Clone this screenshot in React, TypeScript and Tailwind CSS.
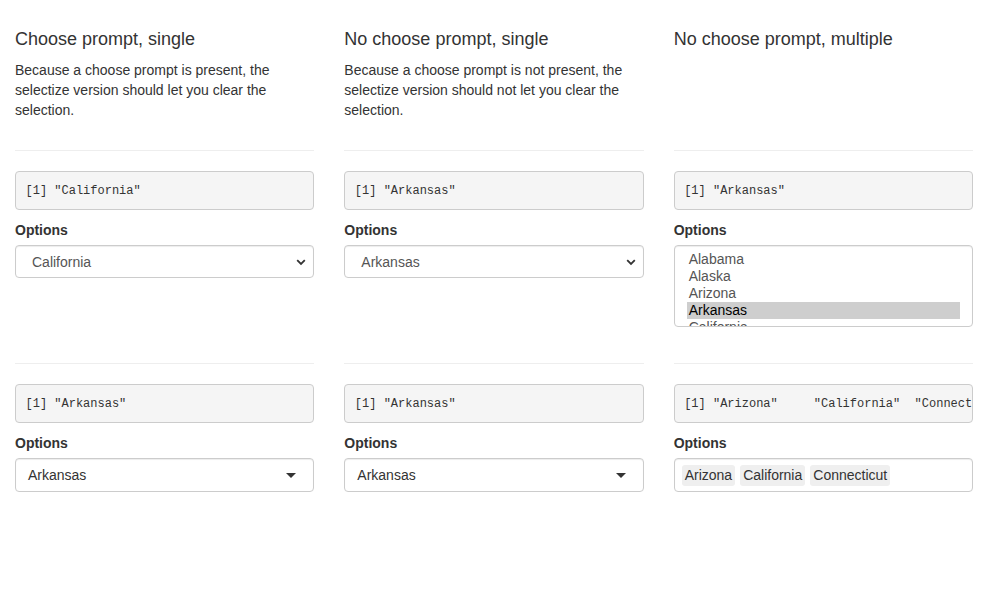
const mono = { fontFamily: '"Liberation Mono", "DejaVu Sans Mono", monospace' }

const states = ['Alabama', 'Alaska', 'Arizona', 'Arkansas', 'California']

function Output({ text }: { text: string }) {
  return (
    <pre
      style={mono}
      className="mb-[10px] overflow-hidden whitespace-pre rounded border border-[#ccc] bg-[#f5f5f5] p-[9.5px] text-[12px] leading-[18px] text-[#333]"
    >
      {text}
    </pre>
  )
}

function Label() {
  return <label className="mb-[5px] block font-bold leading-5">Options</label>
}

// native select (chrome look)
function NativeSelect({ value }: { value: string }) {
  return (
    <div className="relative flex h-[33px] items-center rounded border border-[#ccc] pl-[16px] text-[#555] shadow-[inset_0_1px_1px_rgba(0,0,0,0.075)]">
      {value}
      <svg className="absolute right-[7px] top-[13px]" width="10" height="7" viewBox="0 0 10 7">
        <path d="M1.2 1.2 L5 5 L8.8 1.2" fill="none" stroke="#333" strokeWidth="1.8" />
      </svg>
    </div>
  )
}

function MultiSelect() {
  return (
    <div className="h-[82px] overflow-hidden rounded border border-[#ccc] px-[12px] pt-[5px] text-[#555] shadow-[inset_0_1px_1px_rgba(0,0,0,0.075)]">
      {states.map((s) => (
        <div
          key={s}
          className={`pl-[2px] leading-[17px] ${s === 'Arkansas' ? 'bg-[#cecece] text-black' : ''}`}
        >
          {s}
        </div>
      ))}
    </div>
  )
}

function SelectizeSingle({ value }: { value: string }) {
  return (
    <div className="relative flex h-[34px] items-center rounded border border-[#ccc] pl-[12px] text-[#333] shadow-[inset_0_1px_1px_rgba(0,0,0,0.075)]">
      {value}
      <span className="absolute right-[17px] top-[14px] h-0 w-0 border-x-[5px] border-t-[5px] border-x-transparent border-t-[#333]" />
    </div>
  )
}

function SelectizeMulti({ items }: { items: string[] }) {
  return (
    <div className="flex h-[34px] gap-[5px] rounded border border-[#ccc] pl-[7px] pt-[6px] text-[#333] shadow-[inset_0_1px_1px_rgba(0,0,0,0.075)]">
      {items.map((s) => (
        <span key={s} className="h-[21px] rounded-[3px] bg-[#efefef] px-[3px] leading-[21px]">
          {s}
        </span>
      ))}
    </div>
  )
}

function Cell({ children }: { children: React.ReactNode }) {
  return (
    <div className="px-[15px]">
      <hr className="mb-[20px] mt-[20px] border-0 border-t border-[#eee]" />
      {children}
      <div className="h-[16px]" />
    </div>
  )
}

export default function App() {
  return (
    <div
      className="h-[613px] w-[988px] bg-white text-[14px] leading-5 text-[#333]"
      style={{ fontFamily: '"Liberation Sans", Arial, sans-serif' }}
    >
      <div className="grid grid-cols-3">
        <div className="px-[15px]">
          <h4 className="mb-[11px] mt-[29px] text-[18px] leading-[20px]">Choose prompt, single</h4>
          <p className="mb-[10px]">
            Because a choose prompt is present, the selectize version should let you clear the selection.
          </p>
        </div>
        <div className="px-[15px]">
          <h4 className="mb-[11px] mt-[29px] text-[18px] leading-[20px]">No choose prompt, single</h4>
          <p className="mb-[10px]">
            Because a choose prompt is not present, the selectize version should not let you clear the selection.
          </p>
        </div>
        <div className="px-[15px]">
          <h4 className="mb-[11px] mt-[29px] text-[18px] leading-[20px]">No choose prompt, multiple</h4>
        </div>

        <Cell>
          <Output text={'[1] "California"'} />
          <Label />
          <NativeSelect value="California" />
        </Cell>
        <Cell>
          <Output text={'[1] "Arkansas"'} />
          <Label />
          <NativeSelect value="Arkansas" />
        </Cell>
        <Cell>
          <Output text={'[1] "Arkansas"'} />
          <Label />
          <MultiSelect />
        </Cell>

        <Cell>
          <Output text={'[1] "Arkansas"'} />
          <Label />
          <SelectizeSingle value="Arkansas" />
        </Cell>
        <Cell>
          <Output text={'[1] "Arkansas"'} />
          <Label />
          <SelectizeSingle value="Arkansas" />
        </Cell>
        <Cell>
          <Output text={'[1] "Arizona"     "California"  "Connecticut"'} />
          <Label />
          <SelectizeMulti items={['Arizona', 'California', 'Connecticut']} />
        </Cell>
      </div>
    </div>
  )
}
